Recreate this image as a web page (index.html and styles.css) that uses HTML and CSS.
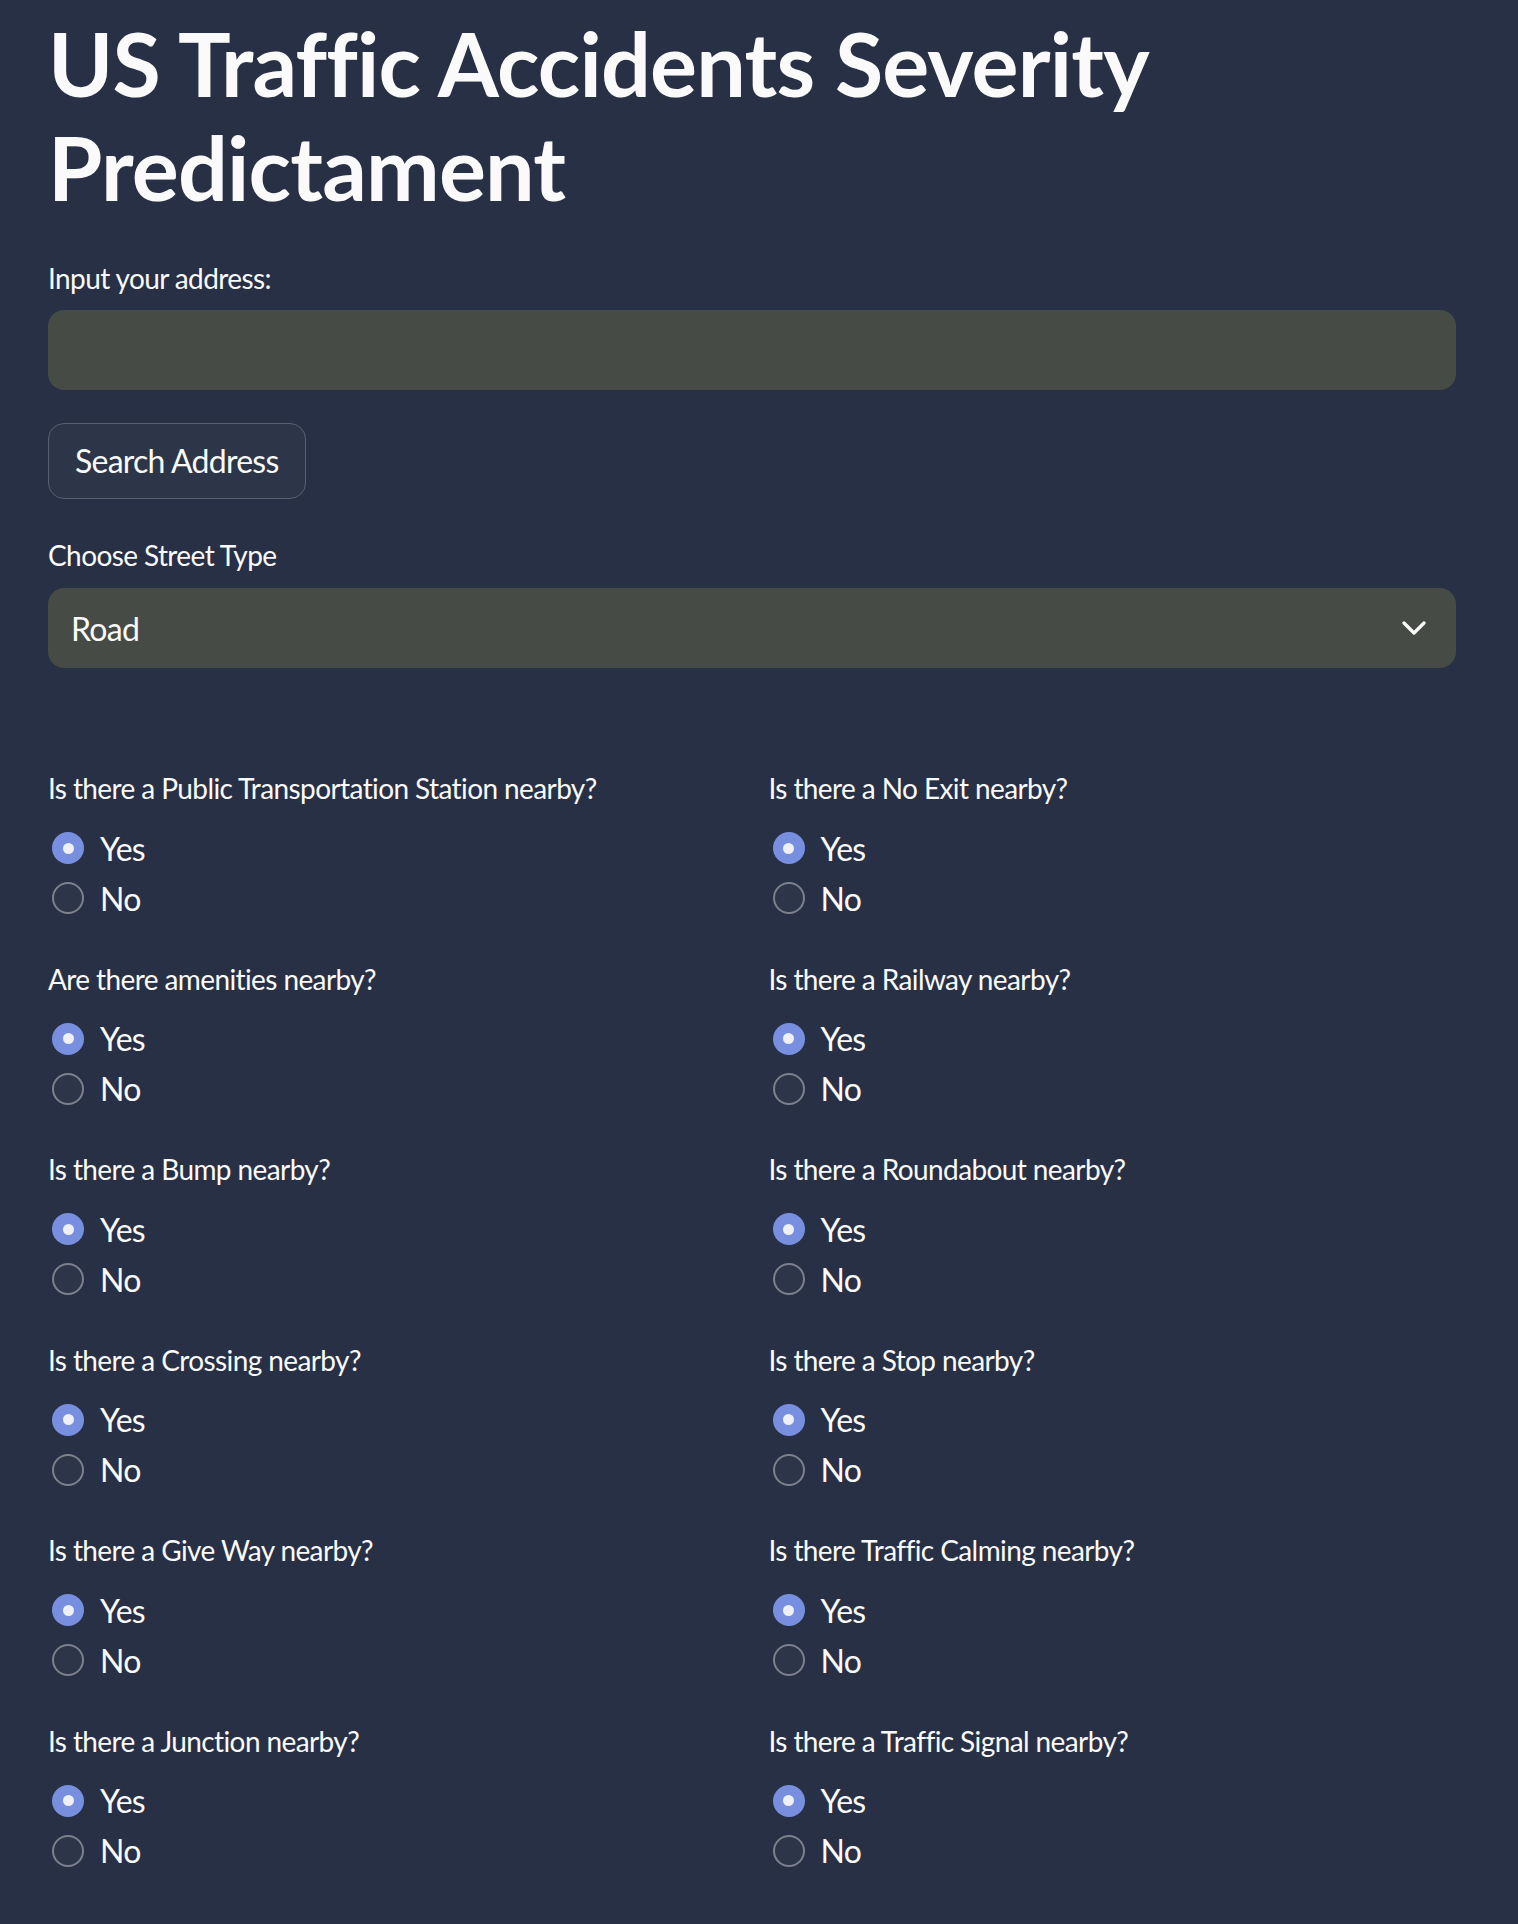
FILE: index.html
```html
<!DOCTYPE html>
<html lang="en">
<head>
<meta charset="utf-8">
<title>US Traffic Accidents Severity Predictament</title>
<link rel="stylesheet" href="styles.css">
</head>
<body>
<main class="app">
  <h1 class="title">US Traffic Accidents Severity Predictament</h1>

  <label class="field-label label-address">Input your address:</label>
  <div class="text-input"></div>

  <button class="btn" type="button">Search Address</button>

  <label class="field-label label-street">Choose Street Type</label>
  <div class="select">
    <span class="select-value">Road</span>
    <svg class="chevron" width="24" height="16" viewBox="0 0 24 16"><polyline points="2,3 12,13 22,3" fill="none" stroke="#fafafa" stroke-width="3.2" stroke-linecap="round" stroke-linejoin="round"/></svg>
  </div>

  <section class="grid">
    <div class="col">
      <div class="group">
        <div class="q">Is there a Public Transportation Station nearby?</div>
        <div class="opt"><span class="radio on"></span><span>Yes</span></div>
        <div class="opt"><span class="radio"></span><span>No</span></div>
      </div>
      <div class="group">
        <div class="q">Are there amenities nearby?</div>
        <div class="opt"><span class="radio on"></span><span>Yes</span></div>
        <div class="opt"><span class="radio"></span><span>No</span></div>
      </div>
      <div class="group">
        <div class="q">Is there a Bump nearby?</div>
        <div class="opt"><span class="radio on"></span><span>Yes</span></div>
        <div class="opt"><span class="radio"></span><span>No</span></div>
      </div>
      <div class="group">
        <div class="q">Is there a Crossing nearby?</div>
        <div class="opt"><span class="radio on"></span><span>Yes</span></div>
        <div class="opt"><span class="radio"></span><span>No</span></div>
      </div>
      <div class="group">
        <div class="q">Is there a Give Way nearby?</div>
        <div class="opt"><span class="radio on"></span><span>Yes</span></div>
        <div class="opt"><span class="radio"></span><span>No</span></div>
      </div>
      <div class="group">
        <div class="q">Is there a Junction nearby?</div>
        <div class="opt"><span class="radio on"></span><span>Yes</span></div>
        <div class="opt"><span class="radio"></span><span>No</span></div>
      </div>
    </div>
    <div class="col">
      <div class="group">
        <div class="q">Is there a No Exit nearby?</div>
        <div class="opt"><span class="radio on"></span><span>Yes</span></div>
        <div class="opt"><span class="radio"></span><span>No</span></div>
      </div>
      <div class="group">
        <div class="q">Is there a Railway nearby?</div>
        <div class="opt"><span class="radio on"></span><span>Yes</span></div>
        <div class="opt"><span class="radio"></span><span>No</span></div>
      </div>
      <div class="group">
        <div class="q">Is there a Roundabout nearby?</div>
        <div class="opt"><span class="radio on"></span><span>Yes</span></div>
        <div class="opt"><span class="radio"></span><span>No</span></div>
      </div>
      <div class="group">
        <div class="q">Is there a Stop nearby?</div>
        <div class="opt"><span class="radio on"></span><span>Yes</span></div>
        <div class="opt"><span class="radio"></span><span>No</span></div>
      </div>
      <div class="group">
        <div class="q">Is there Traffic Calming nearby?</div>
        <div class="opt"><span class="radio on"></span><span>Yes</span></div>
        <div class="opt"><span class="radio"></span><span>No</span></div>
      </div>
      <div class="group">
        <div class="q">Is there a Traffic Signal nearby?</div>
        <div class="opt"><span class="radio on"></span><span>Yes</span></div>
        <div class="opt"><span class="radio"></span><span>No</span></div>
      </div>
    </div>
  </section>
</main>
</body>
</html>
```
FILE: styles.css
```css
html, body {
  margin: 0;
  padding: 0;
  background: #283045;
}
body {
  font-family: "Lato", "Liberation Sans", sans-serif;
  color: #fafafa;
  min-height: 1924px;
}
.app {
  width: 1408px;
  padding: 11px 0 0 48px;
  display: flex;
  flex-direction: column;
  align-items: flex-start;
}
.title {
  margin: 0;
  font-size: 88px;
  line-height: 104px;
  font-weight: 700;
  letter-spacing: -0.8px;
  width: 1300px;
}
.field-label {
  display: block;
  font-size: 28px;
  line-height: 40px;
  height: 40px;
  letter-spacing: -0.6px;
}
.label-address { margin-top: 39px; }
.text-input {
  margin-top: 12px;
  width: 100%;
  height: 80px;
  border-radius: 16px;
  background: #464b45;
}
.btn {
  margin-top: 33px;
  height: 76px;
  padding: 0 26px;
  border: 1.5px solid #586072;
  border-radius: 16px;
  background: #2d3649;
  color: #fafafa;
  font-family: inherit;
  font-size: 32px;
  letter-spacing: -0.75px;
  line-height: 1;
}
.label-street { margin-top: 36px; }
.select {
  margin-top: 13px;
  width: 100%;
  height: 80px;
  box-sizing: border-box;
  border-radius: 16px;
  background: #464b45;
  display: flex;
  align-items: center;
  justify-content: space-between;
  padding: 0 30px 0 23px;
}
.select-value {
  font-size: 32px;
  letter-spacing: -0.7px;
}
.chevron { display: block; }
.grid {
  margin-top: 100px;
  width: 100%;
  display: grid;
  grid-template-columns: 1fr 1fr;
  column-gap: 33px;
}
.col {
  display: flex;
  flex-direction: column;
  gap: 35.5px;
}
.q {
  font-size: 28px;
  line-height: 40px;
  height: 40px;
  letter-spacing: -0.6px;
  margin-bottom: 15px;
}
.opt {
  display: flex;
  align-items: center;
  height: 50px;
  font-size: 32px;
  letter-spacing: -0.8px;
  padding-left: 4px;
}
.radio {
  width: 32px;
  height: 32px;
  box-sizing: border-box;
  border-radius: 50%;
  border: 2px solid #7d818b;
  background: #2d3649;
  margin-right: 16px;
  flex: none;
  display: flex;
  align-items: center;
  justify-content: center;
}
.radio.on {
  border: none;
  background: #788fdf;
}
.radio.on::after {
  content: "";
  width: 11px;
  height: 11px;
  border-radius: 50%;
  background: #eef0f7;
}
```
